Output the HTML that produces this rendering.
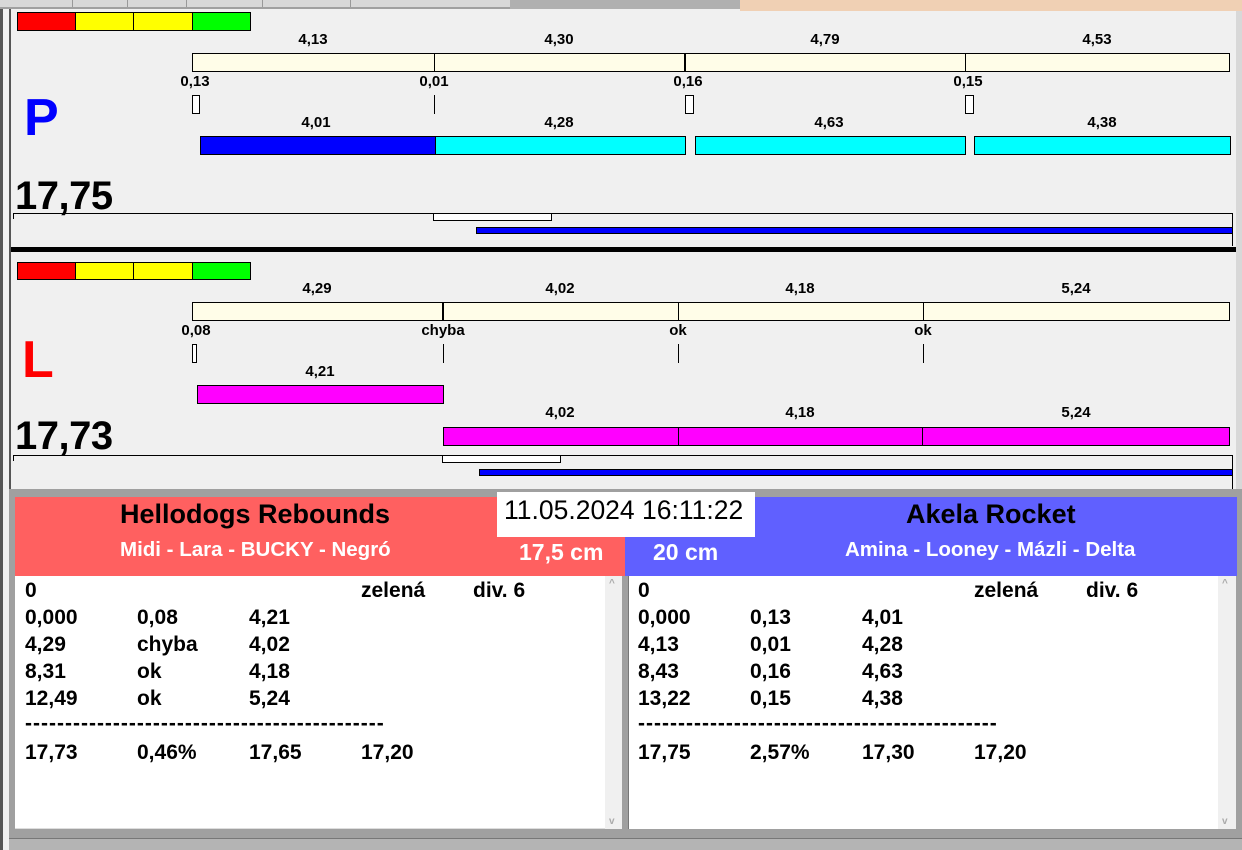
<!DOCTYPE html>
<html><head><meta charset="utf-8"><style>
*{margin:0;padding:0;box-sizing:border-box}
body{width:1242px;height:850px;background:#f0f0f0;position:relative;overflow:hidden;font-family:"Liberation Sans",Arial,sans-serif;font-weight:bold;color:#000}
div{position:absolute}
.b{border:1px solid #000}
.l{font-size:15px;transform:translateX(-50%);white-space:nowrap;line-height:16px}
.t{font-size:21px;line-height:22px;white-space:nowrap}
</style></head><body>
<!-- frame -->
<div style="left:0;top:0;width:3px;height:850px;background:#555"></div>
<div style="left:9px;top:8px;width:2px;height:482px;background:#555"></div>
<!-- top strip -->
<div style="left:0;top:0;width:740px;height:9px;background:#d8d8d8;border-bottom:2px solid #a0a0a0"></div>
<div style="left:72px;top:0;width:1px;height:7px;background:#999"></div>
<div style="left:127px;top:0;width:1px;height:7px;background:#999"></div>
<div style="left:186px;top:0;width:1px;height:7px;background:#999"></div>
<div style="left:262px;top:0;width:1px;height:7px;background:#999"></div>
<div style="left:350px;top:0;width:1px;height:7px;background:#999"></div>
<div style="left:510px;top:0;width:230px;height:9px;background:#b0b0b0"></div>
<div style="left:740px;top:0;width:502px;height:11px;background:#f0d0b4"></div>
<div style="left:1236px;top:11px;width:6px;height:480px;background:#d8d8d8"></div>

<!-- TOP PANEL -->
<div class="b" style="left:17px;top:12px;width:59px;height:19px;background:#f00"></div>
<div class="b" style="left:75px;top:12px;width:59px;height:19px;background:#ff0"></div>
<div class="b" style="left:133px;top:12px;width:60px;height:19px;background:#ff0"></div>
<div class="b" style="left:192px;top:12px;width:59px;height:19px;background:#0f0"></div>

<div class="l" style="left:313px;top:32px">4,13</div>
<div class="l" style="left:559px;top:32px">4,30</div>
<div class="l" style="left:825px;top:32px">4,79</div>
<div class="l" style="left:1097px;top:32px">4,53</div>
<div class="b" style="left:192px;top:53px;width:1038px;height:19px;background:#fffde8"></div>
<div style="left:434px;top:53px;width:1px;height:19px;background:#000"></div>
<div style="left:684px;top:53px;width:2px;height:19px;background:#000"></div>
<div style="left:965px;top:53px;width:1px;height:19px;background:#000"></div>
<div class="l" style="left:195px;top:74px">0,13</div>
<div class="l" style="left:434px;top:74px">0,01</div>
<div class="l" style="left:688px;top:74px">0,16</div>
<div class="l" style="left:968px;top:74px">0,15</div>
<div class="b" style="left:192px;top:95px;width:8px;height:19px;background:#fff"></div>
<div style="left:434px;top:95px;width:1px;height:19px;background:#000"></div>
<div class="b" style="left:685px;top:95px;width:9px;height:19px;background:#fff"></div>
<div class="b" style="left:965px;top:95px;width:9px;height:19px;background:#fff"></div>

<div style="left:24px;top:88px;font-size:52px;line-height:60px;color:#0000ff">P</div>
<div class="l" style="left:316px;top:115px">4,01</div>
<div class="l" style="left:559px;top:115px">4,28</div>
<div class="l" style="left:829px;top:115px">4,63</div>
<div class="l" style="left:1102px;top:115px">4,38</div>
<div class="b" style="left:200px;top:136px;width:236px;height:19px;background:#0000ff"></div>
<div class="b" style="left:435px;top:136px;width:251px;height:19px;background:#00ffff"></div>
<div class="b" style="left:695px;top:136px;width:271px;height:19px;background:#00ffff"></div>
<div class="b" style="left:974px;top:136px;width:257px;height:19px;background:#00ffff"></div>

<div style="left:15px;top:174px;font-size:40px;line-height:44px;letter-spacing:-0.5px">17,75</div>
<div style="left:13px;top:213px;width:1220px;height:1px;background:#000"></div>
<div style="left:13px;top:213px;width:1px;height:6px;background:#000"></div>
<div style="left:1232px;top:213px;width:1px;height:33px;background:#000"></div>
<div class="b" style="left:433px;top:213px;width:119px;height:8px;background:#fff"></div>
<div style="left:476px;top:227px;width:757px;height:7px;background:#0000ff;border:1px solid #000"></div>
<div style="left:11px;top:247px;width:1225px;height:5px;background:#000"></div>

<!-- BOTTOM PANEL -->
<div class="b" style="left:17px;top:262px;width:59px;height:18px;background:#f00"></div>
<div class="b" style="left:75px;top:262px;width:59px;height:18px;background:#ff0"></div>
<div class="b" style="left:133px;top:262px;width:60px;height:18px;background:#ff0"></div>
<div class="b" style="left:192px;top:262px;width:59px;height:18px;background:#0f0"></div>

<div class="l" style="left:317px;top:281px">4,29</div>
<div class="l" style="left:560px;top:281px">4,02</div>
<div class="l" style="left:800px;top:281px">4,18</div>
<div class="l" style="left:1076px;top:281px">5,24</div>
<div class="b" style="left:192px;top:302px;width:1038px;height:19px;background:#fffde8"></div>
<div style="left:442px;top:302px;width:2px;height:19px;background:#000"></div>
<div style="left:678px;top:302px;width:1px;height:19px;background:#000"></div>
<div style="left:923px;top:302px;width:1px;height:19px;background:#000"></div>
<div class="l" style="left:196px;top:323px">0,08</div>
<div class="l" style="left:443px;top:323px">chyba</div>
<div class="l" style="left:678px;top:323px">ok</div>
<div class="l" style="left:923px;top:323px">ok</div>
<div class="b" style="left:192px;top:344px;width:5px;height:19px;background:#fff"></div>
<div style="left:443px;top:344px;width:1px;height:19px;background:#000"></div>
<div style="left:678px;top:344px;width:1px;height:19px;background:#000"></div>
<div style="left:923px;top:344px;width:1px;height:19px;background:#000"></div>

<div style="left:22px;top:330px;font-size:52px;line-height:60px;color:#ff0000">L</div>
<div class="l" style="left:320px;top:364px">4,21</div>
<div class="b" style="left:197px;top:385px;width:247px;height:19px;background:#ff00ff"></div>
<div class="l" style="left:560px;top:405px">4,02</div>
<div class="l" style="left:800px;top:405px">4,18</div>
<div class="l" style="left:1076px;top:405px">5,24</div>
<div class="b" style="left:443px;top:427px;width:787px;height:19px;background:#ff00ff"></div>
<div style="left:678px;top:427px;width:1px;height:19px;background:#000"></div>
<div style="left:922px;top:427px;width:1px;height:19px;background:#000"></div>

<div style="left:15px;top:414px;font-size:40px;line-height:44px;letter-spacing:-0.5px">17,73</div>
<div style="left:13px;top:455px;width:1220px;height:1px;background:#000"></div>
<div style="left:13px;top:455px;width:1px;height:6px;background:#000"></div>
<div style="left:1232px;top:455px;width:1px;height:34px;background:#000"></div>
<div class="b" style="left:442px;top:455px;width:119px;height:8px;background:#fff"></div>
<div style="left:479px;top:469px;width:754px;height:7px;background:#0000ff;border:1px solid #000"></div>

<!-- RESULTS -->
<div style="left:9px;top:489px;width:1233px;height:361px;background:#a0a0a0"></div>
<div style="left:15px;top:497px;width:610px;height:79px;background:#ff6060"></div>
<div style="left:625px;top:497px;width:612px;height:79px;background:#6060ff"></div>
<div style="left:120px;top:498px;font-size:27px;line-height:32px">Hellodogs Rebounds</div>
<div style="left:906px;top:498px;font-size:27px;line-height:32px">Akela Rocket</div>
<div style="left:120px;top:538px;font-size:20.5px;line-height:24px;color:#fff">Midi - Lara - BUCKY - Negró</div>
<div style="left:845px;top:538px;font-size:20.5px;line-height:24px;color:#fff">Amina - Looney - Mázli - Delta</div>
<div style="left:519px;top:538px;font-size:23px;line-height:28px;color:#fff">17,5 cm</div>
<div style="left:653px;top:538px;font-size:23px;line-height:28px;color:#fff">20 cm</div>
<div style="left:497px;top:492px;width:258px;height:45px;background:#fff;font-weight:normal;font-size:26.5px;line-height:36px;padding-left:7px;white-space:nowrap">11.05.2024 16:11:22</div>

<div style="left:15px;top:576px;width:607px;height:253px;background:#fff;border-bottom:1px solid #ddd"></div>
<div style="left:605px;top:576px;width:17px;height:253px;background:#f0f0f0;color:#aaa;font-size:10px;text-align:center"><span style="position:absolute;left:4px;top:2px">^</span><span style="position:absolute;left:4px;bottom:2px">v</span></div>
<div style="left:628px;top:576px;width:608px;height:253px;background:#fff;border-left:1px solid #777"></div>
<div style="left:1218px;top:576px;width:18px;height:253px;background:#f0f0f0;color:#aaa;font-size:10px;text-align:center"><span style="position:absolute;left:4px;top:2px">^</span><span style="position:absolute;left:4px;bottom:2px">v</span></div>

<div class="t" style="left:25px;top:580px">0</div><div class="t" style="left:361px;top:580px">zelená</div><div class="t" style="left:473px;top:580px">div. 6</div>
<div class="t" style="left:25px;top:607px">0,000</div><div class="t" style="left:137px;top:607px">0,08</div><div class="t" style="left:249px;top:607px">4,21</div>
<div class="t" style="left:25px;top:634px">4,29</div><div class="t" style="left:137px;top:634px">chyba</div><div class="t" style="left:249px;top:634px">4,02</div>
<div class="t" style="left:25px;top:661px">8,31</div><div class="t" style="left:137px;top:661px">ok</div><div class="t" style="left:249px;top:661px">4,18</div>
<div class="t" style="left:25px;top:688px">12,49</div><div class="t" style="left:137px;top:688px">ok</div><div class="t" style="left:249px;top:688px">5,24</div>
<div class="t" style="left:25px;top:713px;letter-spacing:1px">---------------------------------------------</div>
<div class="t" style="left:25px;top:742px">17,73</div><div class="t" style="left:137px;top:742px">0,46%</div><div class="t" style="left:249px;top:742px">17,65</div><div class="t" style="left:361px;top:742px">17,20</div>

<div class="t" style="left:638px;top:580px">0</div><div class="t" style="left:974px;top:580px">zelená</div><div class="t" style="left:1086px;top:580px">div. 6</div>
<div class="t" style="left:638px;top:607px">0,000</div><div class="t" style="left:750px;top:607px">0,13</div><div class="t" style="left:862px;top:607px">4,01</div>
<div class="t" style="left:638px;top:634px">4,13</div><div class="t" style="left:750px;top:634px">0,01</div><div class="t" style="left:862px;top:634px">4,28</div>
<div class="t" style="left:638px;top:661px">8,43</div><div class="t" style="left:750px;top:661px">0,16</div><div class="t" style="left:862px;top:661px">4,63</div>
<div class="t" style="left:638px;top:688px">13,22</div><div class="t" style="left:750px;top:688px">0,15</div><div class="t" style="left:862px;top:688px">4,38</div>
<div class="t" style="left:638px;top:713px;letter-spacing:1px">---------------------------------------------</div>
<div class="t" style="left:638px;top:742px">17,75</div><div class="t" style="left:750px;top:742px">2,57%</div><div class="t" style="left:862px;top:742px">17,30</div><div class="t" style="left:974px;top:742px">17,20</div>

<div style="left:9px;top:838px;width:1233px;height:12px;background:#b4b4b4;border-top:1px solid #777"></div>
</body></html>
